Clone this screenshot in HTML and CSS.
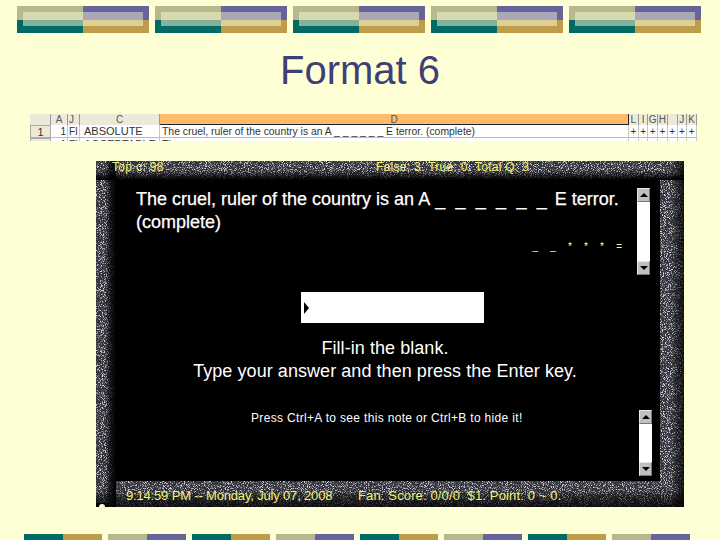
FILE: index.html
```html
<!DOCTYPE html>
<html lang="en">
<head>
<meta charset="utf-8">
<title>Format 6</title>
<link rel="stylesheet" href="styles.css">
</head>
<body>
<div class="slide">
  <div class="top-bars">
    <div class="bar"><div class="bar-inner"></div></div>
    <div class="bar"><div class="bar-inner"></div></div>
    <div class="bar"><div class="bar-inner"></div></div>
    <div class="bar"><div class="bar-inner"></div></div>
    <div class="bar"><div class="bar-inner"></div></div>
  </div>
  <h1 class="title">Format 6</h1>
  <div class="sheet">
    <div class="cell head"></div><div class="cell head ctr">A</div><div class="cell head">J</div><div class="cell head ctr">C</div><div class="cell head orange ctr">D</div>
    <div class="cell head ctr">L</div><div class="cell head ctr">I</div><div class="cell head ctr">G</div><div class="cell head ctr">H</div><div class="cell head ctr"></div><div class="cell head ctr">J</div><div class="cell head ctr">K</div>
    <div class="cell rowhead ctr">1</div><div class="cell body right">1</div><div class="cell body">FI</div><div class="cell body word">ABSOLUTE</div><div class="cell body main">The cruel, ruler of the country is an A _ _ _ _ _ _ E terror. (complete)</div>
    <div class="cell body ctr">+</div><div class="cell body ctr">+</div><div class="cell body ctr">+</div><div class="cell body ctr">+</div><div class="cell body ctr">+</div><div class="cell body ctr">+</div><div class="cell body ctr">+</div>
    <div class="cell rowhead ctr">2</div><div class="cell body right">1</div><div class="cell body">FI</div><div class="cell body word">ACCEPTABLE</div><div class="cell body main">The</div>
    <div class="cell body ctr">+</div><div class="cell body ctr">+</div><div class="cell body ctr">+</div><div class="cell body ctr">+</div><div class="cell body ctr">+</div><div class="cell body ctr">+</div><div class="cell body ctr">+</div>
  </div>
  <div class="panel">
    <svg class="noise" width="588" height="346" aria-hidden="true">
      <filter id="speckle" x="0" y="0" width="100%" height="100%">
        <feTurbulence type="fractalNoise" baseFrequency="1.05" numOctaves="2" seed="7"/>
        <feColorMatrix type="matrix" values="0 0 0 0 0.62  0 0 0 0 0.63  0 0 0 0 0.74  4 4 0 0 -4.05"/>
      </filter>
      <rect width="588" height="346" fill="#333339"/>
      <rect width="588" height="346" filter="url(#speckle)"/>
    </svg>
    <div class="shade"></div>
    <div class="status status-top"><span class="st-a">Top c: 98</span><span class="st-b">False: 3. True: 0. Total Q: 3</span></div>
    <div class="screen">
      <div class="question-row">
        <div class="question">
          <p class="q-text">The cruel, ruler of the country is an A <span class="blanks">_ _ _ _ _ _</span> E terror. (complete)</p>
          <div class="marks"><span>_</span><span>_</span><span>*</span><span>*</span><span>*</span><span>=</span></div>
        </div>
        <div class="scroll scroll-q">
          <div class="sbtn"><span class="up"></span></div>
          <div class="strack"></div>
          <div class="sbtn"><span class="down"></span></div>
        </div>
      </div>
      <div class="answer"><span class="caret"></span></div>
      <div class="instructions">
        <p>Fill-in the blank.</p>
        <p>Type your answer and then press the Enter key.</p>
      </div>
      <div class="note-row">
        <p class="note">Press Ctrl+A to see this note or Ctrl+B to hide it!</p>
        <div class="scroll scroll-n">
          <div class="sbtn"><span class="up"></span></div>
          <div class="strack"></div>
          <div class="sbtn"><span class="down"></span></div>
        </div>
      </div>
    </div>
    <div class="status status-bottom"><span class="st-c">9:14:59 PM -- Monday, July 07, 2008</span><span class="st-d">Fan. Score: 0/0/0 &nbsp;$1. Point: 0 ~ 0.</span></div>
    <div class="corner"></div>
  </div>
  <div class="bottom-bars">
    <div class="mini"><i class="teal"></i><i class="gold"></i></div>
    <div class="mini"><i class="khaki"></i><i class="purple"></i></div>
    <div class="mini"><i class="teal"></i><i class="gold"></i></div>
    <div class="mini"><i class="khaki"></i><i class="purple"></i></div>
    <div class="mini"><i class="teal"></i><i class="gold"></i></div>
    <div class="mini"><i class="khaki"></i><i class="purple"></i></div>
    <div class="mini"><i class="teal"></i><i class="gold"></i></div>
    <div class="mini"><i class="khaki"></i><i class="purple"></i></div>
  </div>
</div>
</body>
</html>
```
FILE: styles.css
```css
* { box-sizing: border-box; }
html, body { margin: 0; padding: 0; }
body { background: #ffffd5; font-family: "Liberation Sans", Arial, sans-serif; }
p { margin: 0; }
.slide { width: 720px; height: 540px; overflow: hidden; display: flex; flex-direction: column; }

.top-bars { display: flex; gap: 6px; padding: 6px 0 0 17px; height: 33px; }
.bar {
  width: 132px; height: 27px; padding: 6px;
  background:
    linear-gradient(#b8b88e, #b8b88e) 0 0 / 66px 14px no-repeat,
    linear-gradient(#67649c, #67649c) 66px 0 / 66px 14px no-repeat,
    linear-gradient(#006a64, #006a64) 0 14px / 66px 13px no-repeat,
    linear-gradient(#bd9c4a, #bd9c4a) 66px 14px / 66px 13px no-repeat;
}
.bar-inner {
  width: 120px; height: 14px;
  background:
    linear-gradient(#d8d9ac, #d8d9ac) 0 0 / 60px 8px no-repeat,
    linear-gradient(#a9a7b8, #a9a7b8) 60px 0 / 60px 8px no-repeat,
    linear-gradient(#84b09c, #84b09c) 0 8px / 60px 6px no-repeat,
    linear-gradient(#dfcf93, #dfcf93) 60px 8px / 60px 6px no-repeat;
}

.title {
  margin: 0; height: 81px; padding-top: 15px;
  font-size: 40px; line-height: 44px; font-weight: 400;
  text-align: center; color: #3f3f75;
}

.sheet {
  width: 667px; height: 27px; margin-left: 30px; overflow: hidden;
  display: grid;
  grid-template-columns: 21px 17px 12px 80px 469px repeat(7, 9.71px);
  grid-template-rows: 11px 13px 13px;
  font-size: 10px; color: #333;
}
.cell { overflow: hidden; white-space: nowrap; line-height: 11px; padding: 0 1px; border-right: 1px solid #c8c8c0; }
.ctr { text-align: center; padding: 0; }
.right { text-align: right; }
.head { background: #ece9d8; color: #555; border-right-color: #999; }
.orange { background: #ffbb6c; color: #555; border-bottom: 1px solid #222; border-right-color: #222; }
.body { background: #fff; border-bottom: 1px solid #bbb; line-height: 13px; }
.rowhead { background: #ece9d8; border: 1px solid #aaa; line-height: 12px; font-size: 11px; }
.word { font-size: 11px; padding-left: 4px; }
.main { font-size: 10.4px; padding-left: 2px; }

.panel {
  position: relative; width: 588px; height: 346px; margin: 20px 0 0 96px;
  display: flex; flex-direction: column; background: #000; overflow: hidden;
}
.noise { position: absolute; inset: 0; display: block; }
.shade {
  position: absolute; inset: 0;
  background:
    linear-gradient(to left, rgba(0,0,0,.8) 0, rgba(0,0,0,.45) 6px, transparent 12px) right 0 / 24px 100% no-repeat,
    linear-gradient(to right, transparent 9px, rgba(0,0,0,.7) 14px, #000 20px) 0 0 / 20px 100% no-repeat,
    linear-gradient(to bottom, transparent 9px, rgba(0,0,0,.55) 14px, #000 19px) 0 0 / 100% 19px no-repeat,
    linear-gradient(to top, rgba(0,0,0,.8) 0, rgba(0,0,0,.45) 10px, transparent 18px) 0 100% / 100% 26px no-repeat;
}
.status { position: relative; height: 19px; color: #f2f272; white-space: nowrap; display: flex; }
.status-top { font-size: 12px; line-height: 12px; }
.st-a { margin-left: 16px; width: 264px; letter-spacing: .35px; }
.st-b { letter-spacing: .3px; }
.status-bottom { height: 26px; line-height: 30px; font-size: 13px; }
.st-c { margin-left: 30px; width: 232px; letter-spacing: -.17px; }
.st-d { letter-spacing: .14px; }

.screen {
  position: relative; height: 301px; margin: 0 24px 0 20px; background: #000;
  color: #fff; display: flex; flex-direction: column;
}
.question-row { display: flex; margin-top: 8px; height: 87px; padding-left: 20px; }
.question { width: 501px; }
.q-text { font-size: 18px; line-height: 23px; -webkit-text-stroke: .25px #fff; padding-right: 10px; }
.blanks { word-spacing: 5.3px; margin: 0 3px 0 1px; }
.marks { display: flex; justify-content: flex-end; gap: 12.2px; padding-right: 15px; margin-top: 8px; color: #ffffa8; font-size: 10px; line-height: 10px; }
.scroll { width: 13px; display: flex; flex-direction: column; }
.scroll-q { height: 87px; }
.scroll-n { height: 66px; margin-right: 8px; }
.strack { flex: 1; background: #fff; }
.sbtn {
  height: 14px; background: #c0c0c0; display: flex; align-items: center; justify-content: center;
  border: 1px solid; border-color: #e8e8e8 #777 #777 #e8e8e8;
}
.up, .down { width: 0; height: 0; border-left: 4px solid transparent; border-right: 4px solid transparent; }
.up { border-bottom: 4px solid #000; }
.down { border-top: 4px solid #000; }

.answer { width: 183px; height: 31px; margin: 17px 0 0 185px; background: #fff; display: flex; align-items: center; padding-left: 3px; }
.caret { width: 0; height: 0; border-left: 5px solid #000; border-top: 6px solid transparent; border-bottom: 6px solid transparent; }

.instructions { width: 538px; margin-top: 14px; text-align: center; font-size: 18px; line-height: 23px; letter-spacing: .06px; }
.note-row { display: flex; margin-top: 27px; padding-left: 135px; }
.note { flex: 1; font-size: 12px; line-height: 16px; letter-spacing: .33px; }

.corner { position: absolute; left: 0; bottom: 0; width: 12px; height: 4px; background: #000; }
.corner::after { content: ""; position: absolute; left: 3px; bottom: 0; width: 6px; height: 3px; border-radius: 3px 3px 0 0; background: #ffffd5; }

.bottom-bars { display: flex; gap: 6px; padding-left: 24px; margin-top: 27px; }
.mini { display: flex; height: 6px; }
.mini i { display: block; width: 39px; }
.teal { background: #006a64; }
.gold { background: #bd9c4a; }
.khaki { background: #b8b88e; }
.purple { background: #67649c; }
```
